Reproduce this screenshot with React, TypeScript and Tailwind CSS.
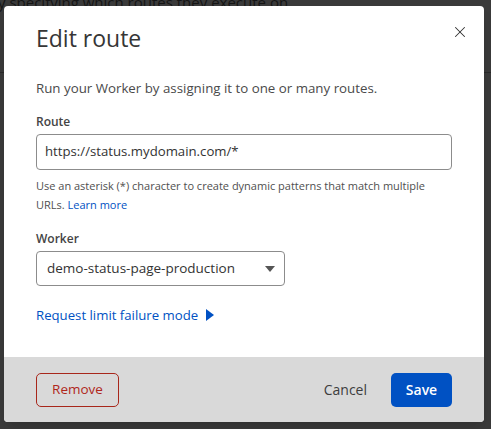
import { X } from "lucide-react";

export default function App() {
  return (
    <div
      className="relative w-[491px] h-[429px] overflow-hidden bg-[#333333]"
      style={{ fontFamily: '"Open Sans", "Noto Sans", sans-serif' }}
    >
      {/* page behind the overlay */}
      <div className="absolute inset-0 bg-[#3a3a3a]">
        <p className="mt-[-9px] ml-[-2px] text-[15px] text-[#151515] whitespace-nowrap">
          y specifying which routes they execute on
        </p>
        <div className="mt-[58px] h-px w-full bg-[#2a2a2a]" />
      </div>

      <div className="relative ml-[4px] mt-[6px] flex h-[416px] w-[480px] flex-col overflow-hidden rounded-[4px] bg-white shadow-lg">
        <div className="flex-1 px-[32px] pt-[15px]">
          <div className="flex items-start justify-between">
            <h2 className="text-[23px] leading-[34px] text-[#363636]">Edit route</h2>
            <button className="mt-[2px] mr-[-17px] text-[#333]">
              <X className="h-[18px] w-[18px]" strokeWidth={1.4} />
            </button>
          </div>

          <p className="mt-[23px] text-[13.3px] leading-[20px] text-[#4a4a4a]">
            Run your Worker by assigning it to one or many routes.
          </p>

          <label className="mt-[15px] block text-[12px] font-semibold leading-[18px] text-[#444]">
            Route
          </label>
          <div className="mt-[3px] flex h-[36px] w-[416px] items-center rounded-[4px] border border-[#8c8c8c] px-[8px] text-[13.2px] text-[#333]">
            https://status.mydomain.com/*
          </div>
          <p className="mt-[6px] text-[11px] leading-[19px] text-[#4f4f4f]">
            Use an asterisk (*) character to create dynamic patterns that match multiple URLs.{" "}
            <a className="text-[#0051c3]">Learn more</a>
          </p>

          <label className="mt-[16px] block text-[12px] font-semibold leading-[18px] text-[#444]">
            Worker
          </label>
          <div className="mt-[3px] flex h-[35px] w-[249px] items-center justify-between rounded-[4px] border border-[#8c8c8c] pl-[10px] pr-[9px] text-[13.5px] text-[#333]">
            <span>demo-status-page-production</span>
            <svg width="10" height="6" viewBox="0 0 10 6">
              <path d="M0 0h10L5 6z" fill="#555" />
            </svg>
          </div>

          <div className="mt-[19px] flex items-center gap-[8px] text-[13.2px] leading-[20px] text-[#0051c3]">
            <span>Request limit failure mode</span>
            <svg width="8" height="12" viewBox="0 0 8 12">
              <path d="M0 0l8 6-8 6z" fill="#0051c3" />
            </svg>
          </div>
        </div>

        <div className="flex h-[65px] items-center justify-between bg-[#d9d9d9] px-[32px]">
          <button className="h-[34px] w-[83px] rounded-[5px] border border-[#a8271b] text-[13.5px] text-[#b0271b]">
            Remove
          </button>
          <div className="flex items-center gap-[24px]">
            <button className="text-[14px] text-[#3d3d3d]">Cancel</button>
            <button className="h-[34px] w-[61px] rounded-[5px] bg-[#0051c3] text-[14px] font-semibold text-white">
              Save
            </button>
          </div>
        </div>
      </div>
    </div>
  );
}
